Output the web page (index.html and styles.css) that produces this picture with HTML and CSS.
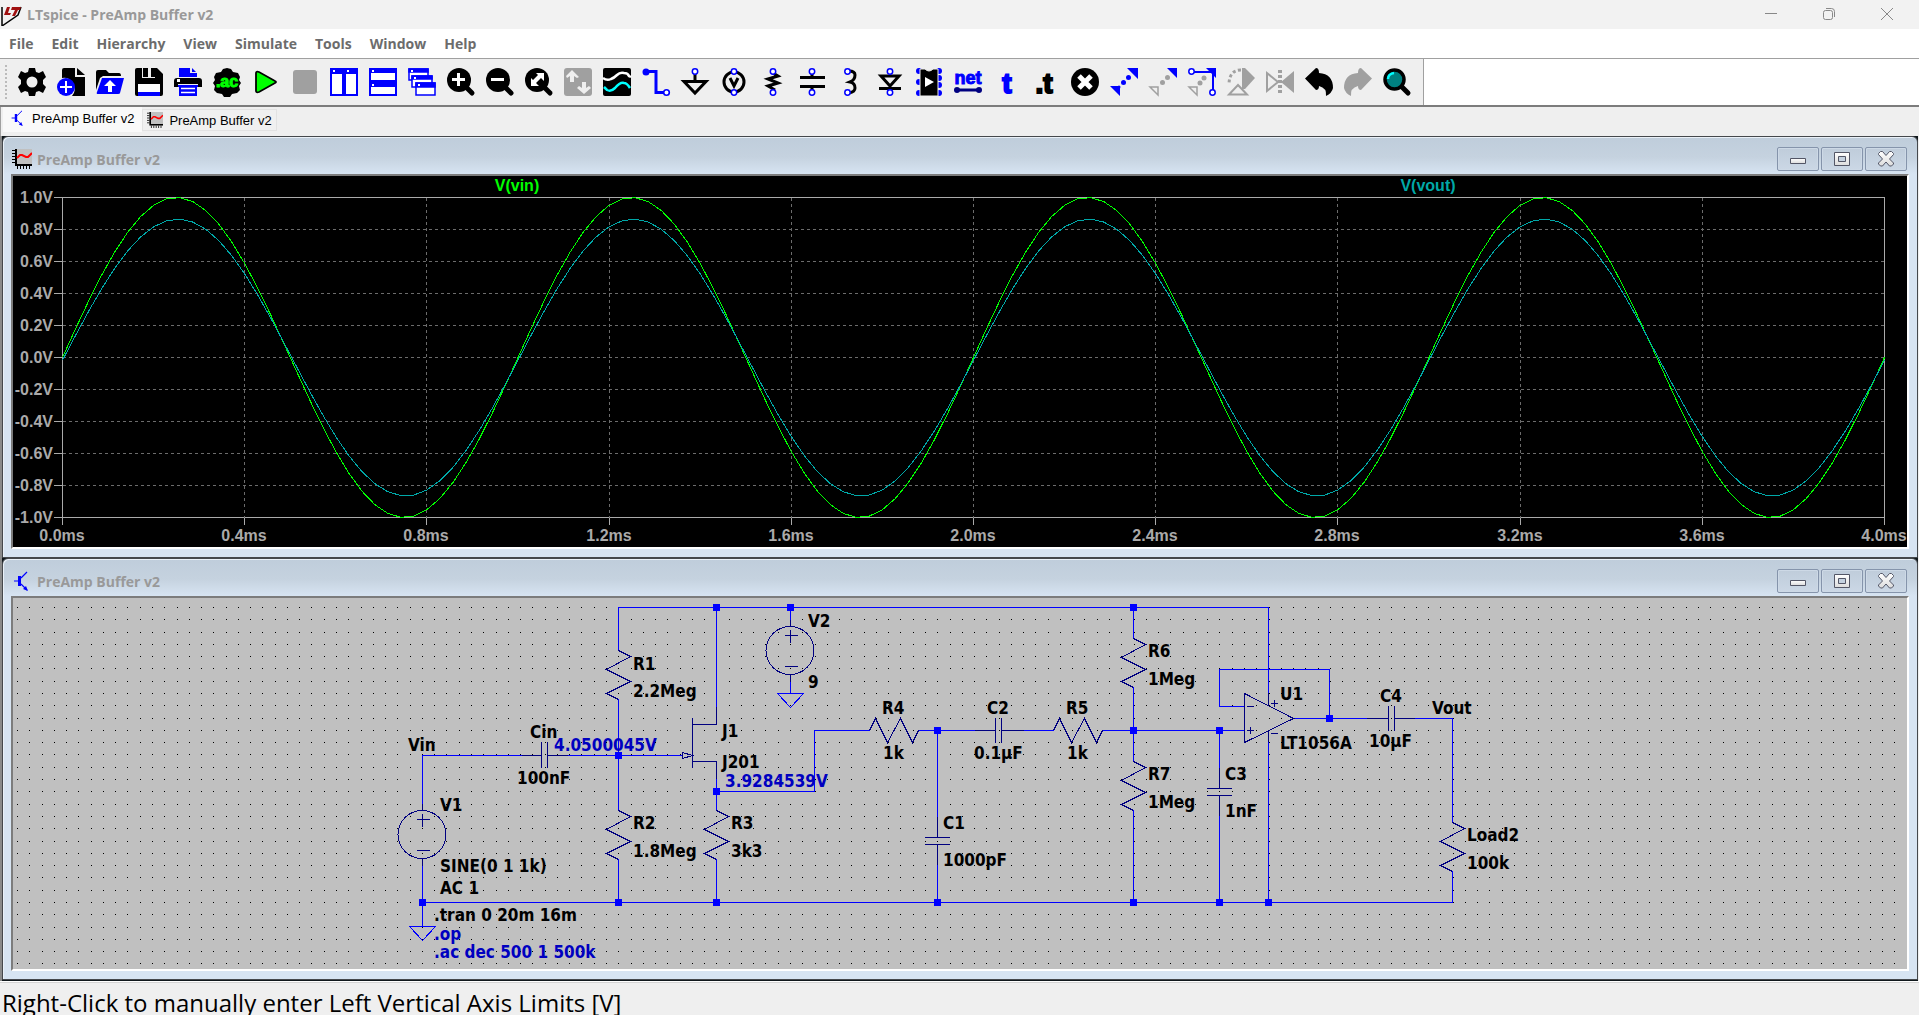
FILE: index.html
```
<!DOCTYPE html>
<html lang="en">
<head>
    <meta charset="UTF-8">
    <meta name="viewport" content="width=device-width, initial-scale=1.0">
    <title>LTspice - PreAmp Buffer v2</title>
    <link rel="stylesheet" href="styles.css">
</head>
<body>
    <svg class="defs" aria-hidden="true">
        <defs>
            <linearGradient id="glyph" x1="0" y1="0" x2="0" y2="1">
                <stop offset="0" stop-color="#fff"/>
                <stop offset="1" stop-color="#dcdcdc"/>
            </linearGradient>
            <symbol id="wave-icon" viewBox="0 0 20 20">
                <path fill="#c0c0c0" d="M3 0h17v17H3z"/>
                <path stroke="#000" stroke-width="2" fill="none" d="M4 0v17M3 16h17"/>
                <path stroke="#000" fill="none" d="M0 1.500h3M0 4.500h3M0 7.500h3M0 10.500h3M0 13.500h3M5.500 17v3M8.500 17v3M11.500 17v3M14.500 17v3M17.500 17v3"/>
                <path stroke="#f00" stroke-width="2" fill="none" d="M5 9l3-3h2l4 2h2l4-4"/>
            </symbol>
            <symbol id="bjt-icon" viewBox="0 0 20 20">
                <path stroke="#00f" stroke-width="1.200" fill="none" d="M2 10h6M9 7l6-6M9 13l6 6"/>
                <path fill="#00f" d="M6 5h3v10H6zM16 20l-5-2 3-3z"/>
            </symbol>
            <symbol id="res-v" overflow="visible"><path d="M0 0L12 6L-12 19L12 31L-12 43L0 49"/></symbol>
            <symbol id="res-h" overflow="visible"><path d="M0 0L6-12L18 12L31-12L43 12L49 0"/></symbol>
            <symbol id="src" overflow="visible"><path d="M0-31V-24M0 24V31M-6-15H7M0-21V-8M-6 16H7"/><circle cx="-.5" r="24"/></symbol>
            <symbol id="gnd" overflow="visible"><path d="M-13 0H13L0 14Z"/></symbol>
            <symbol id="dot" overflow="visible"><path d="M-3.500-3.500h7v7h-7z"/></symbol>
        </defs>
    </svg>

    <header class="titlebar">
        <svg class="logo" viewBox="0 0 22 22">
            <path d="M2 4v19l16-11 3-8" fill="none" stroke="#000" stroke-width="1.500"/>
            <path d="M7 4l-3 8h6l1-2H8l2-6zM12 4h9l-1 3h-2l-3 6h-3l3-6h-4z" fill="#a01010"/>
        </svg>
        <h1>LTspice - PreAmp Buffer v2</h1>
        <button aria-label="Minimize"><svg viewBox="0 0 12 12"><path d="M0 5.500h12"/></svg></button>
        <button aria-label="Restore"><svg viewBox="0 0 12 12"><path d="M.5 4.500q0-2 2-2h5q2 0 2 2v5q0 2-2 2h-5q-2 0-2-2zM3 .5h5.500q3 0 3 3V9"/></svg></button>
        <button aria-label="Close"><svg viewBox="0 0 12 12"><path d="M0 0l12 12M12 0L0 12"/></svg></button>
    </header>

    <nav class="menubar">
        <button>File</button>
        <button>Edit</button>
        <button>Hierarchy</button>
        <button>View</button>
        <button>Simulate</button>
        <button>Tools</button>
        <button>Window</button>
        <button>Help</button>
    </nav>

    <div class="toolbar-row">
        <div class="toolbar">
            <span class="grip"></span>
            <button aria-label="Settings"><svg viewBox="0 0 28 28"><path fill-rule="evenodd" d="M11 0h6l1 4 3 1 4-2 3 6-3 3v4l3 3-3 6-4-2-3 1-1 4h-6l-1-4-3-1-4 2-3-6 3-3v-4L0 9l3-6 4 2 3-1zM14 8.500a5.500 5.500 0 1 0 0 11 5.500 5.500 0 0 0 0-11z"/></svg></button>
            <button aria-label="New schematic"><svg viewBox="0 0 28 28"><path d="M7 0h11v9h10v19H15a11 11 0 0 0-10-18V2q0-2 2-2z"/><path d="M20 0l8 7h-8z"/><circle cx="9" cy="19" r="9" fill="#00f"/><path stroke="#fff" stroke-width="2" d="M3 19h12M9 13v12"/></svg></button>
            <button aria-label="Open"><svg viewBox="0 0 28 28"><path d="M0 22V4q0-2 2-2h8l3 3h10q2 0 2 3H7L4 10z"/><path fill="#00f" d="M6 10h22l-4 15q0 1-2 1H2q-2 0-1-2z"/><path fill="#fff" d="M14 12l6 6h-4v6h-4v-6H8z"/></svg></button>
            <button aria-label="Save"><svg viewBox="0 0 28 28"><path d="M2 0h20l6 6v20q0 2-2 2H2q-2 0-2-2V2q0-2 2-2z"/><path fill="#efefef" d="M7 0h13v10H7z"/><path d="M8 0h5v9H8zM16 0h6v9h-6z"/><path fill="#fff" d="M3 16h22v8H3z"/><path fill="#00f" d="M3 24h22v4H3z"/></svg></button>
            <button aria-label="Print"><svg viewBox="0 0 28 28"><path fill="#00f" d="M5 0h11v5h7v4H5zM18 0l4 4h-4z"/><path d="M3 10h22q3 0 3 3v6h-4v-3H4v3H0v-6q0-3 3-3z"/><path fill="#fff" d="M3 11h3v3H3z"/><path fill="#00f" d="M4 17h20v2H4zM5 18h18v10H5z"/><path stroke="#fff" stroke-width="1.500" d="M7 20.500h14M7 24.500h14"/></svg></button>
            <button aria-label="Edit analysis"><svg viewBox="0 0 28 28"><path d="M10 1l4-1 4 1 2 3 5 1 2 4-1 3 2 3-2 3 1 4-3 3-5 1-2 3h-6l-2-3-5-1-3-3 1-4-2-3 2-3-1-3 2-4 5-1z"/><text x="14" y="19" text-anchor="middle" class="ac">.ac</text></svg></button>
            <button aria-label="Run"><svg viewBox="0 0 28 28"><path d="M4 5q0-2 3-1l16 9q2 1 0 2L7 24q-3 1-3-1z" fill="#0f0" stroke="#000" stroke-width="1.800"/></svg></button>
            <button aria-label="Stop"><svg viewBox="0 0 28 28"><rect x="2" y="2" width="24" height="24" rx="3" fill="#a0a0a0"/></svg></button>
            <button aria-label="Tile vertically"><svg viewBox="0 0 28 28"><path fill="#fff" stroke="#00f" stroke-width="2" d="M1 1h12v26H1zM15 1h12v26H15z"/><path fill="#00f" d="M1 1h12v5H1zM15 1h12v5H15z"/><path fill="#fff" d="M3 2h2v2H3zM17 2h2v2h-2z"/></svg></button>
            <button aria-label="Tile horizontally"><svg viewBox="0 0 28 28"><path fill="#fff" stroke="#00f" stroke-width="2" d="M1 1h26v12H1zM1 15h26v12H1z"/><path fill="#00f" d="M1 1h26v4H1zM1 15h26v4H1z"/><path fill="#fff" d="M3 2h2v2H3zM3 16h2v2H3z"/></svg></button>
            <button aria-label="Cascade"><svg viewBox="0 0 28 28"><g fill="#fff" stroke="#00f" stroke-width="1.500"><path d="M1 1h19v11H1z"/><path fill="#00f" d="M1 1h19v3H1z"/><path d="M4 8h20v11H4z"/><path fill="#00f" d="M4 8h20v3H4z"/><path d="M8 15h19v12H8z"/><path fill="#00f" d="M8 15h19v4H8z"/></g><path fill="#fff" d="M3 2h2v2H3zM6 9h2v2H6zM10 16h2v2h-2z"/></svg></button>
            <button aria-label="Zoom in"><svg viewBox="0 0 28 28"><circle cx="12" cy="12" r="12"/><path stroke="#000" stroke-width="5" stroke-linecap="round" d="M17 17l8 8"/><path stroke="#fff" stroke-width="3" d="M5 11.500h13M11.500 5v13"/></svg></button>
            <button aria-label="Zoom out"><svg viewBox="0 0 28 28"><circle cx="12" cy="12" r="12"/><path stroke="#000" stroke-width="5" stroke-linecap="round" d="M17 17l8 8"/><path stroke="#fff" stroke-width="3" d="M5 11.500h13"/></svg></button>
            <button aria-label="Zoom to fit"><svg viewBox="0 0 28 28"><circle cx="12" cy="12" r="12"/><path stroke="#000" stroke-width="5" stroke-linecap="round" d="M17 17l8 8"/><path fill="#fff" d="M11 5h8v8l-3-3-5 5 3 3H6v-8l2 2 5-5z"/></svg></button>
            <button aria-label="Autorange"><svg viewBox="0 0 28 28"><rect width="28" height="28" rx="3" fill="#a0a0a0"/><path fill="#efefef" d="M8 2l7 7-2 1-3-2v6H6V8l-3 2-1-2zM20 26l-7-6 2-2 3 2v-6h4v6l3-2 2 2z"/></svg></button>
            <button aria-label="Pick visible traces"><svg viewBox="0 0 28 28"><rect width="28" height="28" rx="2"/><g fill="none" stroke-width="2.500"><path stroke="#fff" d="M0 10q4 3 8 1 3-1 6-4 3-3 7-2 4 0 5 3l2 1"/><path stroke="#0ff" d="M1 19l3 3q4 2 8-2 5-6 9-5 3 0 6 5"/></g></svg></button>
            <button aria-label="Wire"><svg viewBox="0 0 28 28"><path fill="none" stroke="#00f" stroke-width="3" d="M3 3.500h11v21h8"/><circle cx="4" cy="4" r="3.500" fill="#00f"/><circle cx="24.500" cy="24.500" r="2.800" fill="#fff" stroke="#00f" stroke-width="1.600"/></svg></button>
            <button aria-label="Ground"><svg viewBox="0 0 28 28"><path fill="#efefef" stroke="#000" stroke-width="3" d="M14 6v7M3 13.500h22L14 25z"/><circle cx="14" cy="3.500" r="2.700" fill="#fff" stroke="#00f" stroke-width="1.500"/></svg></button>
            <button aria-label="Voltage source"><svg viewBox="0 0 28 28"><circle cx="14" cy="14" r="10" fill="none" stroke="#000" stroke-width="3"/><path fill="none" stroke="#000" stroke-width="3" d="M10 10l4 8 4-8"/><g fill="#fff" stroke="#00f" stroke-width="1.500"><circle cx="14" cy="3.500" r="2.700"/><circle cx="14" cy="24.500" r="2.700"/></g></svg></button>
            <button aria-label="Resistor"><svg viewBox="0 0 28 28"><path fill="none" stroke="#000" stroke-width="3" d="M14 5l5 3-10 3 10 4-10 3 7 4"/><g fill="#fff" stroke="#00f" stroke-width="1.500"><circle cx="14" cy="3.500" r="2.700"/><circle cx="14" cy="24.500" r="2.700"/></g></svg></button>
            <button aria-label="Capacitor"><svg viewBox="0 0 28 28"><path stroke="#000" stroke-width="3" d="M14 4v5M14 19v5M2 9.500h25M2 18.500h25"/><g fill="#fff" stroke="#00f" stroke-width="1.500"><circle cx="14" cy="3.500" r="2.700"/><circle cx="14" cy="24.500" r="2.700"/></g></svg></button>
            <button aria-label="Inductor"><svg viewBox="0 0 28 28"><path fill="none" stroke="#000" stroke-width="3" d="M12 3q6 0 6 4 0 5-5 7 5 1 5 6 0 4-6 5"/><g fill="#fff" stroke="#00f" stroke-width="1.500"><circle cx="10.500" cy="3.500" r="2.700"/><circle cx="10.500" cy="24.500" r="2.700"/></g></svg></button>
            <button aria-label="Diode"><svg viewBox="0 0 28 28"><path fill="none" stroke="#000" stroke-width="3" d="M14 20v4M3 20.500h22M5 8h18l-9 10z"/><g fill="#fff" stroke="#00f" stroke-width="1.500"><circle cx="14" cy="3.500" r="2.700"/><circle cx="14" cy="24.500" r="2.700"/></g></svg></button>
            <button aria-label="Component"><svg viewBox="0 0 28 28"><g fill="#00f"><circle cx="4" cy="3" r="3"/><circle cx="4" cy="14" r="3"/><circle cx="4" cy="25" r="3"/><circle cx="24" cy="3" r="3"/><circle cx="24" cy="10" r="3"/><circle cx="24" cy="17" r="3"/><circle cx="24" cy="25" r="3"/></g><path stroke="#efefef" d="M5 1h5q4 4 8 0h5v27H5z"/><path fill="#fff" d="M10 9l9 5-9 5z"/></svg></button>
            <button aria-label="Net name"><svg viewBox="0 0 28 28"><text x="14" y="16" text-anchor="middle" class="net">net</text><path stroke="#000080" stroke-width="3" d="M3 22h22"/><g fill="#000080"><circle cx="3" cy="22" r="3"/><circle cx="25" cy="22" r="3"/></g></svg></button>
            <button aria-label="Text"><svg viewBox="0 0 28 28"><text x="14" y="25" text-anchor="middle" class="tee blue">t</text></svg></button>
            <button aria-label="SPICE directive"><svg viewBox="0 0 28 28"><text x="12" y="25" text-anchor="middle" class="tee">.t</text></svg></button>
            <button aria-label="Delete"><svg viewBox="0 0 28 28"><circle cx="14" cy="14" r="14"/><path stroke="#fff" stroke-width="5" d="M8 8l12 12M20 8L8 20"/></svg></button>
            <button aria-label="Move"><svg viewBox="0 0 28 28"><g fill="#00f"><path d="M17 0h11v11zM0 18h10v10z"/><circle cx="18.500" cy="9.500" r="2.500"/><circle cx="13.500" cy="14.500" r="2.500"/><circle cx="9" cy="19" r="1.500"/></g></svg></button>
            <button aria-label="Duplicate"><svg viewBox="0 0 28 28"><path fill="#00f" d="M18 0h10v10z"/><path fill="none" stroke="#a0a0a0" stroke-width="1.500" d="M1 19h8v8z"/><g fill="#a0a0a0"><circle cx="18.500" cy="9.500" r="2.500"/><circle cx="13.500" cy="14.500" r="2.500"/></g></svg></button>
            <button aria-label="Drag"><svg viewBox="0 0 28 28"><path fill="#00f" d="M18 0h10v10z"/><path fill="none" stroke="#00f" stroke-width="2" d="M5 4h20v20"/><path fill="none" stroke="#a0a0a0" stroke-width="1.500" d="M1 19h8v8z"/><g fill="#a0a0a0"><circle cx="16" cy="10" r="2.500"/><circle cx="12" cy="15" r="2.500"/></g><g fill="#fff" stroke="#00f" stroke-width="1.500"><circle cx="3.500" cy="3.500" r="2.700"/><circle cx="24.500" cy="24.500" r="2.700"/></g></svg></button>
            <button aria-label="Rotate"><svg viewBox="0 0 28 28"><path fill="#a0a0a0" d="M15 0h3l10 10-10 11h-3z"/><path fill="none" stroke="#a0a0a0" stroke-width="3" stroke-dasharray="3 2.500" d="M14 2Q2 2 2 17"/><path fill="#efefef" stroke="#a0a0a0" stroke-width="2" d="M11 17l9 9.500H2z"/></svg></button>
            <button aria-label="Mirror"><svg viewBox="0 0 28 28"><path fill="#a0a0a0" d="M28 3v22L15 14z"/><path fill="none" stroke="#a0a0a0" stroke-width="2" d="M1 5v18l11-9z"/><path stroke="#a0a0a0" stroke-width="4" stroke-dasharray="3 2" d="M14 2v24"/></svg></button>
            <button aria-label="Undo"><svg viewBox="0 0 28 28"><path d="M0 10.500L11 0q3 0 3 5 14 1 14 15-1 5-7 8 1-8-7-10 0 4-3 4z"/></svg></button>
            <button aria-label="Redo"><svg viewBox="0 0 28 28"><path fill="#a0a0a0" d="M28 10.500L17 0q-3 0-3 5Q0 6 0 20q1 5 7 8-1-8 7-10 0 4 3 4z"/></svg></button>
            <button aria-label="Search"><svg viewBox="0 0 28 28"><path stroke="#000" stroke-width="5" stroke-linecap="round" d="M17 17l8 8"/><circle cx="11.500" cy="11.500" r="9.500" fill="#008080" stroke="#000" stroke-width="3.500"/><path fill="none" stroke="#0ff" stroke-width="2.500" d="M5 11q0-5 6-6"/></svg></button>
        </div>
    </div>

    <div class="tabs">
        <button class="tab active"><svg><use href="#bjt-icon"/></svg>PreAmp Buffer v2</button>
        <button class="tab"><svg><use href="#wave-icon"/></svg>PreAmp Buffer v2</button>
    </div>

    <main class="workspace">
        <section class="window">
            <div class="caption">
                <svg class="caption-icon"><use href="#wave-icon"/></svg>
                <h2>PreAmp Buffer v2</h2>
                <button aria-label="Minimize"><svg viewBox="0 0 20 20"><path d="M2.500 9.500h15v5h-15z"/></svg></button>
                <button aria-label="Maximize"><svg viewBox="0 0 20 20"><path fill-rule="evenodd" d="M2.500 3.500h15v13h-15zM6.500 7.500v5h7v-5z"/></svg></button>
                <button aria-label="Close"><svg viewBox="0 0 20 20"><path d="M2.500 4.500l2-2h2l3.500 4 3.500-4h2l2 2v1l-4 4.500 4 4v1l-2 2h-2L10 13l-3.500 4h-2l-2-2v-1l4-4-4-4.500z"/></svg></button>
            </div>
            <div class="client">
                <svg class="plot" id="plot" viewBox="13 176 1894 371">
                    <g id="grid"></g>
                    <path id="vin" class="trace green"/>
                    <path id="vout" class="trace teal"/>
                    <text class="green-text" x="517" y="191" text-anchor="middle">V(vin)</text>
                    <text class="teal-text" x="1428" y="191" text-anchor="middle">V(vout)</text>
                </svg>
            </div>
        </section>

        <section class="window">
            <div class="caption">
                <svg class="caption-icon"><use href="#bjt-icon"/></svg>
                <h2>PreAmp Buffer v2</h2>
                <button aria-label="Minimize"><svg viewBox="0 0 20 20"><path d="M2.500 9.500h15v5h-15z"/></svg></button>
                <button aria-label="Maximize"><svg viewBox="0 0 20 20"><path fill-rule="evenodd" d="M2.500 3.500h15v13h-15zM6.500 7.500v5h7v-5z"/></svg></button>
                <button aria-label="Close"><svg viewBox="0 0 20 20"><path d="M2.500 4.500l2-2h2l3.500 4 3.500-4h2l2 2v1l-4 4.500 4 4v1l-2 2h-2L10 13l-3.500 4h-2l-2-2v-1l4-4-4-4.500z"/></svg></button>
            </div>
            <div class="client">
                <svg class="schematic" viewBox="13 598 1894 371">
                    <path id="dots" class="dots"/>
                    <!-- wires -->
                    <path class="wire" d="M618.500 650V607.500H1268.500V693M716.500 607.500V707M790.500 607.500V620M790.500 681V693
                        M422.500 804V755.500H522M568 755.500H682M618.500 699V811M618.500 859V902.500
                        M716.500 779V811M716.500 791.500H814.500V730.500H870M918 730.500H975M1024 730.500H1054M1102 730.500H1244
                        M716.500 859V902.500M937.500 730.500V817M937.500 865V902.500
                        M1133.500 607.500V639M1133.500 687V762M1133.500 810V902.500
                        M1219.500 730.500V768M1219.500 816V902.500M1244 706.500H1219.500V669.500H1329.500V718.500
                        M1293 718.500H1367M1415 718.500H1452.500V823M1452.500 871V902.500H422.500M422.500 865V926M1268.500 742V902.500"/>
                    <!-- parts -->
                    <g class="part">
                        <use href="#res-v" x="618.500" y="650.500"/>
                        <use href="#res-v" x="618.500" y="810.500"/>
                        <use href="#res-v" x="716.500" y="810.500"/>
                        <use href="#res-v" x="1133.500" y="638.500"/>
                        <use href="#res-v" x="1133.500" y="761.500"/>
                        <use href="#res-v" x="1452.500" y="822.500"/>
                        <use href="#res-h" x="869.500" y="730.500"/>
                        <use href="#res-h" x="1053.500" y="730.500"/>
                        <use href="#src" x="422.500" y="834.500"/>
                        <use href="#src" x="790.500" y="650.500"/>
                        <path d="M522 755.500H541.500M541.500 742V768M547.500 742V768M547.500 755.500H568"/>
                        <path d="M975 730.500H995.500M995.500 718V743M1001.500 718V743M1001.500 730.500H1024"/>
                        <path d="M1367 718.500H1388.500M1388.500 706V731M1394.500 706V731M1394.500 718.500H1415"/>
                        <path d="M937.500 817V837.500M925 837.500H950M925 844.500H950M937.500 844.500V865"/>
                        <path d="M1219.500 768V788.500M1207 788.500H1232M1207 795.500H1232M1219.500 795.500V816"/>
                        <path d="M716.500 707V724.500H692.500M692.500 718V768M692.500 761.500H716.500V779M682.500 752.500V758.500L692.500 755.500Z"/>
                        <path d="M1244.500 693.500V742.500L1293.500 718.500ZM1268.500 693V706M1268.500 730V742M1247 706.500H1254M1247 730.500H1254M1250.500 727V734M1271 703.500H1278M1274.500 700V707M1271 733.500H1278"/>
                    </g>
                    <g class="wire">
                        <use href="#gnd" x="422.500" y="926.500"/>
                        <use href="#gnd" x="790.500" y="693.500"/>
                    </g>
                    <g class="junction">
                        <use href="#dot" x="716.500" y="607.500"/>
                        <use href="#dot" x="790.500" y="607.500"/>
                        <use href="#dot" x="1133.500" y="607.500"/>
                        <use href="#dot" x="618.500" y="755.500"/>
                        <use href="#dot" x="716.500" y="791.500"/>
                        <use href="#dot" x="937.500" y="730.500"/>
                        <use href="#dot" x="1133.500" y="730.500"/>
                        <use href="#dot" x="1219.500" y="730.500"/>
                        <use href="#dot" x="1329.500" y="718.500"/>
                        <use href="#dot" x="422.500" y="902.500"/>
                        <use href="#dot" x="618.500" y="902.500"/>
                        <use href="#dot" x="716.500" y="902.500"/>
                        <use href="#dot" x="937.500" y="902.500"/>
                        <use href="#dot" x="1133.500" y="902.500"/>
                        <use href="#dot" x="1219.500" y="902.500"/>
                        <use href="#dot" x="1268.500" y="902.500"/>
                    </g>
                    <!-- labels -->
                    <g class="label">
                        <text x="408" y="751">Vin</text>
                        <text x="530" y="738">Cin</text>
                        <text x="517" y="784">100nF</text>
                        <text x="440" y="811">V1</text>
                        <text x="440" y="872">SINE(0 1 1k)</text>
                        <text x="440" y="894">AC 1</text>
                        <text x="434" y="921">.tran 0 20m 16m</text>
                        <text x="633" y="670">R1</text>
                        <text x="633" y="697">2.2Meg</text>
                        <text x="633" y="829">R2</text>
                        <text x="633" y="857">1.8Meg</text>
                        <text x="731" y="829">R3</text>
                        <text x="731" y="857">3k3</text>
                        <text x="722" y="737">J1</text>
                        <text x="722" y="768">J201</text>
                        <text x="808" y="627">V2</text>
                        <text x="808" y="688">9</text>
                        <text x="882" y="714">R4</text>
                        <text x="883" y="759">1k</text>
                        <text x="987" y="714">C2</text>
                        <text x="974" y="759">0.1µF</text>
                        <text x="1066" y="714">R5</text>
                        <text x="1067" y="759">1k</text>
                        <text x="943" y="829">C1</text>
                        <text x="943" y="866">1000pF</text>
                        <text x="1148" y="657">R6</text>
                        <text x="1148" y="685">1Meg</text>
                        <text x="1148" y="780">R7</text>
                        <text x="1148" y="808">1Meg</text>
                        <text x="1225" y="780">C3</text>
                        <text x="1225" y="817">1nF</text>
                        <text x="1280" y="700">U1</text>
                        <text x="1280" y="749">LT1056A</text>
                        <text x="1380" y="702">C4</text>
                        <text x="1369" y="747">10µF</text>
                        <text x="1432" y="714">Vout</text>
                        <text x="1467" y="841">Load2</text>
                        <text x="1467" y="869">100k</text>
                    </g>
                    <g class="label note">
                        <text x="434" y="940">.op</text>
                        <text x="434" y="958">.ac dec 500 1 500k</text>
                        <text x="554" y="751">4.0500045V</text>
                        <text x="725" y="787">3.9284539V</text>
                    </g>
                </svg>
            </div>
        </section>
    </main>

    <footer class="status">Right-Click to manually enter Left Vertical Axis Limits [V]</footer>

    <script>
        const left = 62.5, right = 1884.5, top0 = 197.5, bottom = 517.5;
        const mid = (top0 + bottom) / 2;
        const grid = document.getElementById('grid');
        let markup = `<path class="axis" d="M54 ${top0}H${right}V525M${left} ${top0}V525M54 ${bottom}H${right}"/>`;

        for (let i = 0; i <= 10; i++) {
            const x = Math.floor(left + i * 182.2) + 0.5;
            const y = top0 + i * 32;
            const volts = ((5 - i) / 5).toFixed(1);
            const ms = (i * 0.4).toFixed(1);
            if (i > 0 && i < 10) {
                markup += `<path class="grid-line" d="M${x} ${top0}V${bottom}M${left} ${y}H${right}"/>`;
                markup += `<path class="axis" d="M54 ${y}H${left}M${x} ${bottom}V525"/>`;
            }
            markup += `<text x="53" y="${y + 5.5}" text-anchor="end">${volts}V</text>`;
            markup += `<text x="${x - 0.5}" y="541" text-anchor="middle">${ms}ms</text>`;
        }
        grid.innerHTML = markup;

        function sine(amp, lag) {
            const steps = 140;
            let d = '';
            for (let i = 0; i <= steps; i++) {
                const x = left + (right - left) * i / steps;
                const y = mid - amp * 160 * Math.sin(8 * Math.PI * i / steps - lag);
                d += (i ? 'L' : 'M') + x.toFixed(1) + ' ' + y.toFixed(1);
            }
            return d;
        }
        document.getElementById('vin').setAttribute('d', sine(1, 0));
        document.getElementById('vout').setAttribute('d', sine(0.865, 0.02));

        let dots = '';
        for (let row = 0; row < 30; row++) {
            for (let col = 0; col < 155; col++) {
                dots += `M${Math.round(17 + col * 12.27)} ${Math.round(607 + row * 12.29)}h1v1h-1z`;
            }
        }
        document.getElementById('dots').setAttribute('d', dots);
    </script>
</body>
</html>
```

FILE: styles.css
```
* {
    box-sizing: border-box;
}

body {
    margin: 0;
    height: 100vh;
    display: flex;
    flex-direction: column;
    overflow: hidden;
    background: #efefef;
    font-family: "Open Sans", "Noto Sans", sans-serif;
}

button {
    margin: 0;
    padding: 0;
    border: none;
    background: none;
    font: inherit;
    color: inherit;
}

.defs {
    position: absolute;
    width: 0;
    height: 0;
}

/* main window */
.titlebar {
    display: flex;
    align-items: center;
    flex: none;
    height: 29px;
    padding: 0 3px 1px 0;
    background: #f2f2f2;
    color: #999;
}

.logo {
    width: 22px;
    height: 24px;
    margin-right: 5px;
}

.titlebar h1 {
    flex: 1;
    margin: 0;
    font-size: 14px;
    font-weight: 700;
}

.titlebar button {
    width: 58px;
    height: 28px;
}

.titlebar button svg {
    display: block;
    width: 12px;
    height: 12px;
    margin: 0 auto;
    fill: none;
    stroke: #888;
    overflow: visible;
}

.menubar {
    display: flex;
    flex: none;
    gap: 18px;
    height: 30px;
    padding-left: 9px;
    background: #fff;
    border-bottom: 1px solid #a0a0a0;
    color: #6c6c6c;
    font-size: 14px;
    font-weight: 700;
}

.toolbar-row {
    display: flex;
    flex: none;
    height: 48px;
    background: #fff;
    border-bottom: 2px solid #7c7c7c;
}

.toolbar {
    position: relative;
    display: flex;
    align-items: center;
    gap: 11px;
    padding: 0 12px 0 18px;
    background: #efefef;
    border-right: 1px solid #a0a0a0;
}

.grip {
    position: absolute;
    left: 5px;
    top: 6px;
    bottom: 4px;
    width: 2px;
    background: repeating-linear-gradient(#bbb 0 2px, transparent 2px 4px);
}

.toolbar button,
.toolbar svg {
    display: block;
    width: 28px;
    height: 28px;
    overflow: visible;
}

.toolbar text {
    font-family: "Liberation Sans", Arial, sans-serif;
    font-weight: bold;
}

.toolbar .ac {
    font-size: 16px;
    fill: #0f0;
    stroke: #0f0;
}

.toolbar .net {
    font-size: 18px;
    fill: #00f;
    stroke: #00f;
}

.toolbar .tee {
    font-size: 28px;
    stroke: #000;
    stroke-width: 2;
}

.toolbar .blue {
    fill: #00f;
    stroke: #00f;
}

.tabs {
    display: flex;
    align-items: flex-start;
    flex: none;
    height: 29px;
    padding-left: 2px;
    border-left: 1px solid #a0a0a0;
    font-family: "Liberation Sans", Arial, sans-serif;
    font-size: 13px;
}

.tab {
    display: flex;
    align-items: center;
    gap: 6px;
    height: 22px;
    margin-top: 2px;
    padding: 0 4px;
    border: 1px solid #e2e2e2;
    background: #f0f0f0;
}

.tab.active {
    height: 25px;
    margin-top: 0;
    padding: 0 8px 3px 7px;
    border: none;
    background: #f9f9f9;
}

.tab svg {
    width: 16px;
    height: 16px;
}

/* child windows */
.workspace {
    display: grid;
    grid-template-rows: 1fr 1fr;
    flex: 1;
    min-height: 0;
    padding: 0 1px 1px 2px;
    background: linear-gradient(90deg, #8a8a8a 2px, #10181c 2px calc(100% - 1px), #efefef calc(100% - 1px));
}

.window {
    display: flex;
    flex-direction: column;
    min-height: 0;
    padding: 0 8px 8px;
    border: 1px solid #45484c;
    border-radius: 6px 6px 0 0;
    background: linear-gradient(#bfcddb, #c5d2df 20px, #d7e4f2 37px);
    box-shadow: inset 1px 1px #eaf1f8;
}

.caption {
    display: flex;
    align-items: center;
    flex: none;
    gap: 2px;
    height: 37px;
    padding-left: 1px;
    padding-right: 2px;
}

.caption-icon {
    width: 20px;
    height: 20px;
    margin-top: 7px;
}

.caption h2 {
    flex: 1;
    margin: 8px 0 0 3px;
    color: #999;
    font-size: 14px;
    font-weight: 700;
}

.caption button {
    width: 42px;
    height: 24px;
    margin-top: 6px;
    border: 1px solid #8594ab;
    border-radius: 2px;
    background: linear-gradient(#bfccda, #cbd7e5);
    box-shadow: inset 0 0 0 1px #cdd9e6;
}

.caption button svg {
    display: block;
    width: 20px;
    height: 20px;
    margin: 0 auto;
    fill: url(#glyph);
    stroke: #535666;
}

.client {
    flex: 1;
    min-height: 0;
    border: 2px solid;
    border-color: #7c7c7c #fff #fff #7c7c7c;
    overflow: hidden;
}

.client svg {
    display: block;
    width: 100%;
    height: 100%;
    overflow: visible;
}

.plot {
    background: #000;
    font-family: "Liberation Sans", Arial, sans-serif;
    font-size: 16px;
    font-weight: bold;
    fill: #aaa;
}

.axis,
.grid-line,
.trace {
    fill: none;
    shape-rendering: crispEdges;
}

.axis {
    stroke: #aaa;
}

.grid-line {
    stroke: #6c6c6c;
    stroke-dasharray: 3 3;
}

.green {
    stroke: #0f0;
}

.teal {
    stroke: #00a8a8;
}

.green-text {
    fill: #0f0;
}

.teal-text {
    fill: #00a8a8;
}

.schematic {
    background: #c0c0c0;
    shape-rendering: crispEdges;
}

.wire {
    fill: none;
    stroke: #00f;
}

.part {
    fill: none;
    stroke: #000080;
}

.junction {
    fill: #00f;
}

.label {
    fill: #000;
    font-family: "DejaVu Sans Condensed", "Noto Sans", sans-serif;
    font-size: 17px;
    font-weight: bold;
}

.note {
    fill: #0000c0;
}

.status {
    flex: none;
    height: 34px;
    padding-left: 2px;
    border-top: 1px solid #fff;
    box-shadow: inset 0 1px #d4d4d4;
    color: #000;
    font-size: 24px;
    line-height: 42px;
    white-space: nowrap;
}
```
